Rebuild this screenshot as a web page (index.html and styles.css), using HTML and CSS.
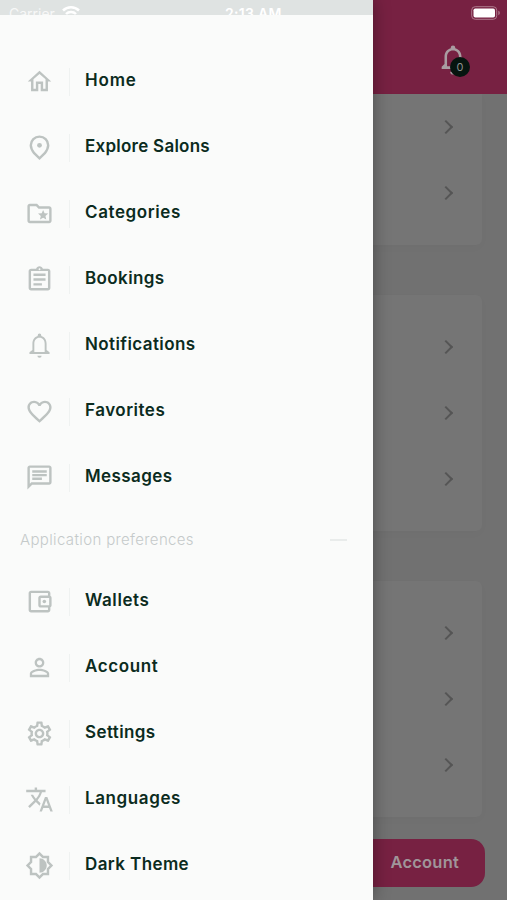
FILE: index.html
```html
<!DOCTYPE html>
<html lang="en">
<head>
<meta charset="utf-8">
<title>Salon menu</title>
<link rel="stylesheet" href="styles.css">
</head>
<body>
<div class="screen">
  <div class="page">
    <header class="topbar">
      <div class="bell">
        <svg class="bell-icon" viewBox="0 0 24 24"><path d="M10 21a2 2 0 0 0 4 0zM20 17.500V19H4v-1.500l2-2V10.500c0-3.100 1.700-5.400 4.400-6.100V4a1.600 1.600 0 0 1 3.200 0v.4c2.700.7 4.400 3 4.400 6.100v5zM16.200 17.200V10.500c0-2.600-1.600-4.500-4.200-4.500s-4.200 1.900-4.200 4.500v6.700z"/></svg>
        <span class="badge">0</span>
      </div>
    </header>
    <main class="cards">
      <section class="card card-first"><div class="link"></div><div class="link"></div></section>
      <section class="card"><div class="link"></div><div class="link"></div><div class="link"></div></section>
      <section class="card"><div class="link"></div><div class="link"></div><div class="link"></div></section>
    </main>
    <footer class="tabs"><div class="tab">Account</div></footer>
  </div>

  <nav class="drawer">
    <ul class="menu">
      <li class="item"><svg class="icon" viewBox="0 0 24 24"><path d="M12 5.690l5 4.500V18h-2v-6H9v6H7v-7.810l5-4.500M12 3L2.300 12H5v8h6v-6h2v6h6v-8h2.700L12 3z"/></svg><span class="label home">Home</span></li>
      <li class="item"><svg class="icon" viewBox="0 0 24 24"><path class="pin" d="M12 3a7.200 7.200 0 0 0-7.200 7.200c0 2.400 1.200 4.500 2.800 6.500L12 20.900l4.400-4.200c1.600-2 2.800-4.100 2.800-6.500A7.200 7.200 0 0 0 12 3z"/><circle cx="12" cy="10.200" r="2"/></svg><span class="label explore">Explore Salons</span></li>
      <li class="item"><svg class="icon" viewBox="0 0 24 24"><path d="M20 6h-8l-2-2H4c-1.100 0-2 .9-2 2v12c0 1.100.9 2 2 2h16c1.100 0 2-.9 2-2V8c0-1.100-.9-2-2-2zm0 12H4V6h5.170l2 2H20v10zm-6.920-3.960L12.390 17 15 15.470 17.610 17l-.69-2.960 2.300-1.990-3.030-.26L15 9l-1.190 2.790-3.030.26z"/></svg><span class="label categories">Categories</span></li>
      <li class="item"><svg class="icon" viewBox="0 0 24 24"><path d="M7 15h7v2H7zm0-4h10v2H7zm0-4h10v2H7zm12-4h-4.180C14.400 1.840 13.300 1 12 1s-2.400.84-2.820 2H5c-1.100 0-2 .9-2 2v14c0 1.100.9 2 2 2h14c1.100 0 2-.9 2-2V5c0-1.100-.9-2-2-2zm-7-.25c.41 0 .75.34.75.75s-.34.75-.75.75-.75-.34-.75-.75.34-.75.75-.75zM19 19H5V5h14v14z"/></svg><span class="label bookings">Bookings</span></li>
      <li class="item"><svg class="icon" viewBox="0 0 24 24"><path d="M10 20.500a2 1.600 0 0 0 4 0zM21.500 19h-19v-1.500l2.800-1.700V10.500c0-3.300 1.900-5.700 5-6.400V3.700a1.700 1.700 0 0 1 3.400 0v.4c3.100.7 5 3.100 5 6.400v5.300l2.800 1.700zM16.900 17.300V10.500c0-2.900-1.900-4.900-4.900-4.900s-4.900 2-4.900 4.900v6.800z" transform="translate(1.500 0) scale(.875 1)"/></svg><span class="label notifications">Notifications</span></li>
      <li class="item"><svg class="icon" viewBox="0 0 24 24"><path d="M16.500 3c-1.740 0-3.410.81-4.500 2.090C10.910 3.810 9.240 3 7.500 3 4.420 3 2 5.420 2 8.500c0 3.780 3.400 6.860 8.550 11.540L12 21.350l1.450-1.320C18.600 15.360 22 12.280 22 8.500 22 5.420 19.580 3 16.500 3zm-4.400 15.550l-.1.1-.1-.1C7.140 14.240 4 11.390 4 8.500 4 6.500 5.500 5 7.500 5c1.540 0 3.040.99 3.570 2.360h1.870C13.460 5.990 14.960 5 16.500 5c2 0 3.500 1.500 3.500 3.500 0 2.890-3.140 5.740-7.900 10.050z"/></svg><span class="label favorites">Favorites</span></li>
      <li class="item"><svg class="icon" viewBox="0 0 24 24"><path d="M4 4h16v12H5.170L4 17.170V4m0-2c-1.100 0-1.990.9-1.990 2L2 22l4-4h14c1.100 0 2-.9 2-2V4c0-1.100-.9-2-2-2H4zm2 10h8v2H6v-2zm0-3h12v2H6V9zm0-3h12v2H6V6z"/></svg><span class="label messages">Messages</span></li>
    </ul>
    <div class="section"><span class="section-title">Application preferences</span><span class="dash"></span></div>
    <ul class="menu">
      <li class="item"><svg class="icon" viewBox="0 0 24 24"><path d="M21 7.280V5c0-1.100-.9-2-2-2H5c-1.110 0-2 .9-2 2v14c0 1.100.89 2 2 2h14c1.100 0 2-.9 2-2v-2.280c.59-.35 1-.98 1-1.720V9c0-.74-.41-1.370-1-1.720zM20 9v6h-7V9h7zM5 19V5h14v2h-6c-1.100 0-2 .9-2 2v6c0 1.100.9 2 2 2h6v2H5z"/><circle cx="16" cy="12" r="1.500"/></svg><span class="label wallets">Wallets</span></li>
      <li class="item"><svg class="icon" viewBox="0 0 24 24"><path d="M12 5.900c1.160 0 2.100.94 2.100 2.100s-.94 2.100-2.100 2.100S9.900 9.160 9.900 8s.94-2.100 2.100-2.100m0 9c2.970 0 6.100 1.460 6.100 2.100v1.100H5.900V17c0-.64 3.130-2.100 6.100-2.100M12 4C9.790 4 8 5.790 8 8s1.790 4 4 4 4-1.790 4-4-1.790-4-4-4zm0 9c-2.670 0-8 1.340-8 4v3h16v-3c0-2.660-5.330-4-8-4z"/></svg><span class="label account">Account</span></li>
      <li class="item"><svg class="icon" viewBox="0 0 24 24"><path d="M19.430 12.980c.04-.32.07-.64.07-.98 0-.34-.03-.66-.07-.98l2.110-1.650c.19-.15.24-.42.12-.64l-2-3.460c-.09-.16-.26-.25-.44-.25-.06 0-.12.01-.17.03l-2.490 1c-.52-.4-1.080-.73-1.690-.98l-.38-2.650C14.460 2.180 14.250 2 14 2h-4c-.25 0-.46.18-.49.42l-.38 2.650c-.61.25-1.170.59-1.690.98l-2.490-1c-.06-.02-.12-.03-.18-.03-.17 0-.34.09-.43.25l-2 3.460c-.13.22-.07.49.12.64l2.110 1.650c-.04.32-.07.65-.07.98 0 .33.03.66.07.98l-2.110 1.650c-.19.15-.24.42-.12.64l2 3.460c.09.16.26.25.44.25.06 0 .12-.01.17-.03l2.490-1c.52.4 1.080.73 1.690.98l.38 2.650c.03.24.24.42.49.42h4c.25 0 .46-.18.49-.42l.38-2.650c.61-.25 1.170-.59 1.690-.98l2.490 1c.06.02.12.03.18.03.17 0 .34-.09.43-.25l2-3.460c.12-.22.07-.49-.12-.64l-2.110-1.650zm-1.980-1.710c.04.31.05.52.05.73 0 .21-.02.43-.05.73l-.14 1.130.89.7 1.080.84-.7 1.210-1.270-.51-1.040-.42-.9.68c-.43.32-.84.56-1.250.73l-1.060.43-.16 1.130-.2 1.350h-1.400l-.19-1.350-.16-1.130-1.060-.43c-.43-.18-.83-.41-1.230-.71l-.91-.7-1.060.43-1.270.51-.7-1.210 1.080-.84.89-.7-.14-1.130c-.03-.31-.05-.54-.05-.74s.02-.43.05-.73l.14-1.130-.89-.7-1.080-.84.7-1.210 1.270.51 1.040.42.9-.68c.43-.32.84-.56 1.250-.73l1.060-.43.16-1.130.2-1.350h1.390l.19 1.350.16 1.130 1.060.43c.43.18.83.41 1.230.71l.91.7 1.060-.43 1.270-.51.7 1.210-1.070.85-.89.7.14 1.130zM12 8c-2.210 0-4 1.790-4 4s1.790 4 4 4 4-1.790 4-4-1.790-4-4-4zm0 6c-1.100 0-2-.9-2-2s.9-2 2-2 2 .9 2 2-.9 2-2 2z"/></svg><span class="label settings">Settings</span></li>
      <li class="item"><svg class="icon" viewBox="0 0 24 24"><path d="M12.870 15.070l-2.540-2.510.03-.03c1.740-1.940 2.980-4.170 3.710-6.530H17V4h-7V2H8v2H1v1.990h11.170C11.500 7.920 10.440 9.750 9 11.350 8.070 10.320 7.300 9.190 6.690 8h-2c.73 1.630 1.730 3.170 2.980 4.560l-5.090 5.020L4 19l5-5 3.110 3.110.76-2.040zM18.500 10h-2L12 22h2l1.120-3h4.750L21 22h2l-4.500-12zm-2.620 7l1.620-4.330L19.120 17h-3.240z"/></svg><span class="label languages">Languages</span></li>
      <li class="item"><svg class="icon" viewBox="0 0 24 24"><path d="M20 8.690V4h-4.690L12 .69 8.690 4H4v4.690L.69 12 4 15.310V20h4.690L12 23.310 15.310 20H20v-4.690L23.310 12 20 8.690zm-2 5.790V18h-3.520L12 20.480 9.520 18H6v-3.520L3.520 12 6 9.520V6h3.520L12 3.520 14.480 6H18v3.520L20.480 12 18 14.480zM12 6v12c3.310 0 6-2.690 6-6s-2.690-6-6-6z"/></svg><span class="label dark">Dark Theme</span></li>
    </ul>
  </nav>

  <div class="statusbar">
    <div class="strip">
      <span class="carrier">Carrier</span>
      <svg class="wifi" viewBox="0 0 18 13"><path d="M1 4.500a11.500 11.500 0 0 1 16 0M4 8a7 7 0 0 1 10 0"/><path class="wifi-dot" d="M6.300 10.200a4 4 0 0 1 5.400 0L9 13z"/></svg>
      <span class="time">2:13 AM</span>
    </div>
    <svg class="battery" viewBox="0 0 30 14"><rect x=".7" y=".7" width="25" height="12.600" rx="3.500" class="battery-case"/><rect x="2.500" y="2.500" width="21.500" height="9" rx="1.800" class="battery-fill"/><path d="M27.300 4.800c2 .5 2 3.900 0 4.400z" class="battery-tip"/></svg>
  </div>
</div>
</body>
</html>
```
FILE: styles.css
```css
* { box-sizing: border-box; }
body { margin: 0; font-family: Inter, "Open Sans", sans-serif; }
ul { list-style: none; margin: 0; padding: 0; }

.screen { position: relative; width: 507px; height: 900px; overflow: hidden; }

.page { display: flex; flex-direction: column; height: 900px; background: #717171; }
.topbar { display: flex; justify-content: flex-end; align-items: flex-end; height: 94px; padding: 0 37px 18px 0; background: #772142; }
.bell { position: relative; width: 34px; height: 34px; }
.bell-icon { display: block; width: 34px; height: 34px; fill: #a99ca1; }
.badge { position: absolute; left: 14px; top: 15px; width: 20px; height: 20px; border-radius: 50%; background: #06150f; color: #8d9390; font-size: 11px; line-height: 20px; text-align: center; }

.cards { display: flex; flex-direction: column; gap: 50px; height: 745px; padding: 0 25px 0 22px; }
.card { height: 236px; padding: 19px 0; border-radius: 6px; background: #757575; box-shadow: 0 3px 10px rgba(0, 0, 0, .02); }
.card-first { height: 151px; padding-top: 0; border-radius: 0 0 6px 6px; }
.link { display: flex; align-items: center; justify-content: flex-end; height: 66px; padding-right: 31px; }
.link::after { content: ""; width: 8px; height: 8px; border: solid #555; border-width: 2px 2px 0 0; transform: rotate(45deg); }

.tabs { display: flex; justify-content: flex-end; padding-right: 22px; }
.tab { width: 160px; height: 48px; padding-right: 26px; border-radius: 14px; background: #772142; color: #a0959a; font-size: 16.5px; font-weight: 600; line-height: 46px; letter-spacing: .2px; text-align: right; }

.drawer { position: absolute; top: 0; left: 0; width: 372.500px; height: 900px; padding-top: 48.500px; background: #fafbfa; box-shadow: 0 0 16px rgba(0, 0, 0, .35); }
.item { display: flex; align-items: center; height: 66px; padding-left: 25px; }
.icon { flex: none; width: 29px; height: 29px; margin-top: -1px; fill: #bdc3c1; }
.icon .pin { fill: none; stroke: #bdc3c1; stroke-width: 2; }
.label { display: flex; align-items: center; height: 28px; margin-left: 15px; padding: 0 0 4px 15px; border-left: 1px solid #eff2f1; color: #0b2b20; font-size: 17px; font-weight: 600; letter-spacing: .4px; white-space: nowrap; }
.explore { letter-spacing: .25px; }
.favorites { letter-spacing: .5px; }
.categories, .wallets, .account, .languages { letter-spacing: .6px; }
.home { letter-spacing: .8px; }

.section { display: flex; align-items: center; justify-content: space-between; height: 58.500px; padding: 0 26px 0 20px; }
.section-title { color: #c5caca; font-size: 15px; font-weight: 300; letter-spacing: .36px; white-space: nowrap; }
.dash { width: 17px; height: 2px; background: #e9eceb; }

.statusbar { position: absolute; inset: 0 0 auto 0; height: 21px; }
.strip { position: relative; display: flex; width: 372.500px; height: 14.500px; padding-left: 9px; overflow: hidden; background: #dfe3e2; color: #fff; font-size: 14px; line-height: 27px; }
.carrier { width: 53px; opacity: .75; }
.wifi { width: 18px; height: 13px; margin-top: 6px; fill: none; stroke: #fff; stroke-width: 2.500; }
.wifi-dot { fill: #fff; stroke: none; }
.time { margin-left: 145px; font-weight: 600; letter-spacing: .3px; }
.battery { position: absolute; top: 6px; right: 6px; width: 30px; height: 14px; }
.battery-case { fill: none; stroke: #ae7a8d; }
.battery-fill { fill: #fff; }
.battery-tip { fill: #ae7a8d; }
```
